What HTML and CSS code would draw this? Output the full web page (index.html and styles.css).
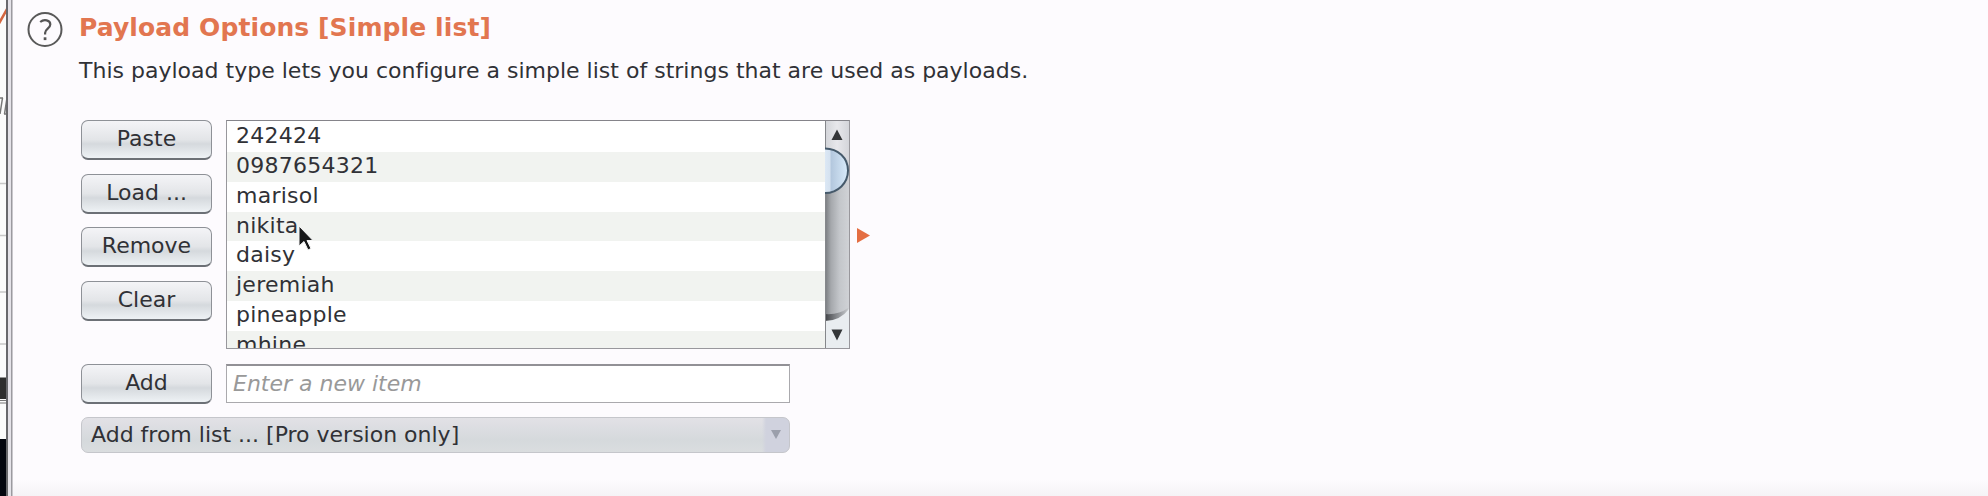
FILE: index.html
```html
<!DOCTYPE html>
<html lang="en">
<head>
<meta charset="utf-8">
<title>Payload Options</title>
<link rel="stylesheet" href="styles.css">
</head>
<body>
<div class="window">
  <aside class="behind">
    <svg width="7" height="496" viewBox="0 0 7 496">
      <rect width="7" height="496" fill="#fbfbfb"/>
      <path d="M-1 23.500L7 9" stroke="#d4663f" stroke-width="2.500"/>
      <path d="M0 98h3M2.500 98L0 114M4.500 114L7 98M5 106h2M4 114h3" stroke="#777" stroke-width="1.500" fill="none"/>
      <path d="M0 183.500h7M0 235.500h7M0 292h7M0 344h7" stroke="#c8c8c8" stroke-width="1.500"/>
      <rect y="377.500" width="7" height="21.500" fill="#2e2e2e"/>
      <path d="M0 400.500h7M0 403h7" stroke="#777" stroke-width="1"/>
      <rect y="439" width="7" height="57" fill="#04060f"/>
    </svg>
  </aside>
  <div class="divider"></div>
  <main class="panel">
    <svg class="help" width="36" height="36" viewBox="0 0 36 36">
      <circle cx="18" cy="18.500" r="16.500" fill="#fdfbfe" stroke="#595959" stroke-width="2"/>
      <path d="M13.200 11C17 7.800 23.300 9 23.300 13.500C23.300 17.400 18.100 18 18.100 22V23.400" fill="none" stroke="#555" stroke-width="2.200"/>
      <rect x="16.700" y="26.300" width="2.700" height="2.800" fill="#555"/>
    </svg>
    <section class="content">
      <h1 class="title">Payload Options [Simple list]</h1>
      <p class="description">This payload type lets you configure a simple list of strings that are used as payloads.</p>
      <div class="editor">
        <div class="buttons">
          <button class="button">Paste</button>
          <button class="button">Load ...</button>
          <button class="button">Remove</button>
          <button class="button">Clear</button>
        </div>
        <div class="list">
          <ul class="items">
            <li>242424</li>
            <li>0987654321</li>
            <li>marisol</li>
            <li>nikita</li>
            <li>daisy</li>
            <li>jeremiah</li>
            <li>pineapple</li>
            <li>mhine</li>
          </ul>
          <svg class="scrollbar" width="24" height="227" viewBox="0 0 24 227">
            <defs>
              <linearGradient id="track"><stop offset="0" stop-color="#777a7e"/><stop offset=".25" stop-color="#a5a8ac"/><stop offset=".6" stop-color="#c3c6ca"/><stop offset="1" stop-color="#d0d2d6"/></linearGradient>
              <linearGradient id="thumb"><stop offset="0" stop-color="#dce8f5"/><stop offset=".2" stop-color="#d5e2f0"/><stop offset=".28" stop-color="#b4c8de"/><stop offset="1" stop-color="#d9ebfa"/></linearGradient>
              <linearGradient id="cap"><stop offset="0" stop-color="#d2d4d8"/><stop offset=".5" stop-color="#e7e7eb"/><stop offset="1" stop-color="#d4d5da"/></linearGradient>
              <linearGradient id="shade"><stop offset="0" stop-color="#404246"/><stop offset=".5" stop-color="#85888c"/><stop offset="1" stop-color="#c5c8cb"/></linearGradient>
            </defs>
            <rect width="24" height="227" fill="url(#track)"/>
            <path d="M0 0H24V39H0Z" fill="url(#cap)"/>
            <path d="M0 193Q14 194 23 187V203H0Z" fill="url(#shade)"/>
            <path d="M0 200Q15 200 24 188V227H0Z" fill="#e9edf0"/>
            <path d="M0.500 0V227" stroke="#85878b" stroke-width="1"/>
            <path d="M0 27.500C13 27.500 23 37 23 49.500S13 72 0 72Z" fill="url(#thumb)"/>
            <path d="M0 27.500C13 27.500 23 37 23 49.500S13 72 0 72" fill="none" stroke="#465a6b" stroke-width="2"/>
            <path d="M6.500 19L12 8.500L17.500 19Z" fill="#343638"/>
            <path d="M6.500 208.500H17.500L12 219.500Z" fill="#343638"/>
          </svg>
        </div>
        <svg class="expand" width="13" height="15" viewBox="0 0 13 15"><path d="M0 0L13 7.500L0 15Z" fill="#e46e42"/></svg>
      </div>
      <div class="add-row">
        <button class="button">Add</button>
        <input class="field" type="text" placeholder="Enter a new item">
      </div>
      <div class="combo">
        <span>Add from list ... [Pro version only]</span>
        <span class="combo-arrow"><svg width="10" height="9" viewBox="0 0 10 9"><path d="M0 0H10L5 9Z" fill="#9b9fab"/></svg></span>
      </div>
    </section>
    <svg class="pointer" width="18" height="28" viewBox="0 0 18 28">
      <path d="M1 1V21L6 16.500L10 25L13 23.500L9 15.500H15Z" fill="#171819" stroke="#f5f5f5" stroke-width="1"/>
    </svg>
  </main>
</div>
</body>
</html>
```
FILE: styles.css
```css
* {
  box-sizing: border-box;
}

body {
  margin: 0;
  font-family: "DejaVu Sans", sans-serif;
  font-size: 22px;
  color: #303136;
  overflow: hidden;
}

.window {
  display: flex;
  height: 496px;
}

.behind {
  width: 6px;
  overflow: hidden;
}

.divider {
  width: 7px;
  background: linear-gradient(90deg, #68686c 0 2px, #e4e2e8 2px 5px, #9b9a9f 5px 6px, #c9c7cc 6px);
}

.panel {
  position: relative;
  flex: 1;
  display: flex;
  align-items: flex-start;
  gap: 16px;
  padding: 11px 0 0 14px;
  background: linear-gradient(#fdfbfe 0 480px, #f5f3f6 496px);
}

.help {
  flex: none;
}

.content {
  display: flex;
  flex-direction: column;
}

.title {
  margin: 0;
  height: 32px;
  line-height: 33px;
  font-size: 25px;
  letter-spacing: 0.1px;
  color: #e27650;
  white-space: nowrap;
}

.description {
  margin: 12px 0 0;
  height: 32px;
  line-height: 32px;
  letter-spacing: 0.01px;
  white-space: nowrap;
}

.editor {
  display: flex;
  align-items: flex-start;
  margin: 33px 0 0 2px;
}

.buttons {
  display: flex;
  flex-direction: column;
  gap: 13.5px;
}

.button {
  width: 131px;
  height: 40px;
  padding: 0 0 2px;
  border: 1.5px solid #8e9197;
  border-bottom: 2px solid #6c7076;
  border-radius: 7px;
  background: linear-gradient(#f4f4f7, #e3e5e8 50%, #d5d9dd 62%, #eef2f5);
  font: inherit;
  color: inherit;
}

.list {
  display: flex;
  width: 624px;
  height: 229px;
  margin-left: 14px;
  border: 1px solid #98979c;
  border-top-color: #85848a;
  overflow: hidden;
}

.items {
  flex: 1;
  margin: 0;
  padding: 1px 0 0;
  list-style: none;
  background: #fff;
}

.items li {
  height: 29.85px;
  padding-left: 9px;
  line-height: 28px;
  letter-spacing: 0.25px;
}

.items li:nth-child(even) {
  background: #f1f3f0;
}

.scrollbar {
  flex: none;
}

.expand {
  margin: 108px 0 0 7px;
}

.add-row {
  display: flex;
  gap: 14px;
  margin: 15px 0 0 2px;
}

.field {
  width: 564px;
  height: 39px;
  padding: 0 6px 2px;
  border: 1.5px solid #aaa9ad;
  border-top: 2px solid #929196;
  background: #fff;
  font: inherit;
}

.field::placeholder {
  color: #999;
  font-style: italic;
  opacity: 1;
}

.combo {
  display: flex;
  align-items: center;
  justify-content: space-between;
  width: 709px;
  height: 36px;
  margin: 13px 0 0 2px;
  padding: 0 0 2px 9px;
  border: 1px solid #c5c6cb;
  border-radius: 7px;
  background: linear-gradient(90deg, transparent 680px, #d0d2de 684px), linear-gradient(#e2e1e6, #d5d9dc 65%, #dadddf);
}

.combo-arrow {
  display: flex;
  padding-right: 8px;
}

.pointer {
  position: absolute;
  left: 285px;
  top: 225px;
}
```
